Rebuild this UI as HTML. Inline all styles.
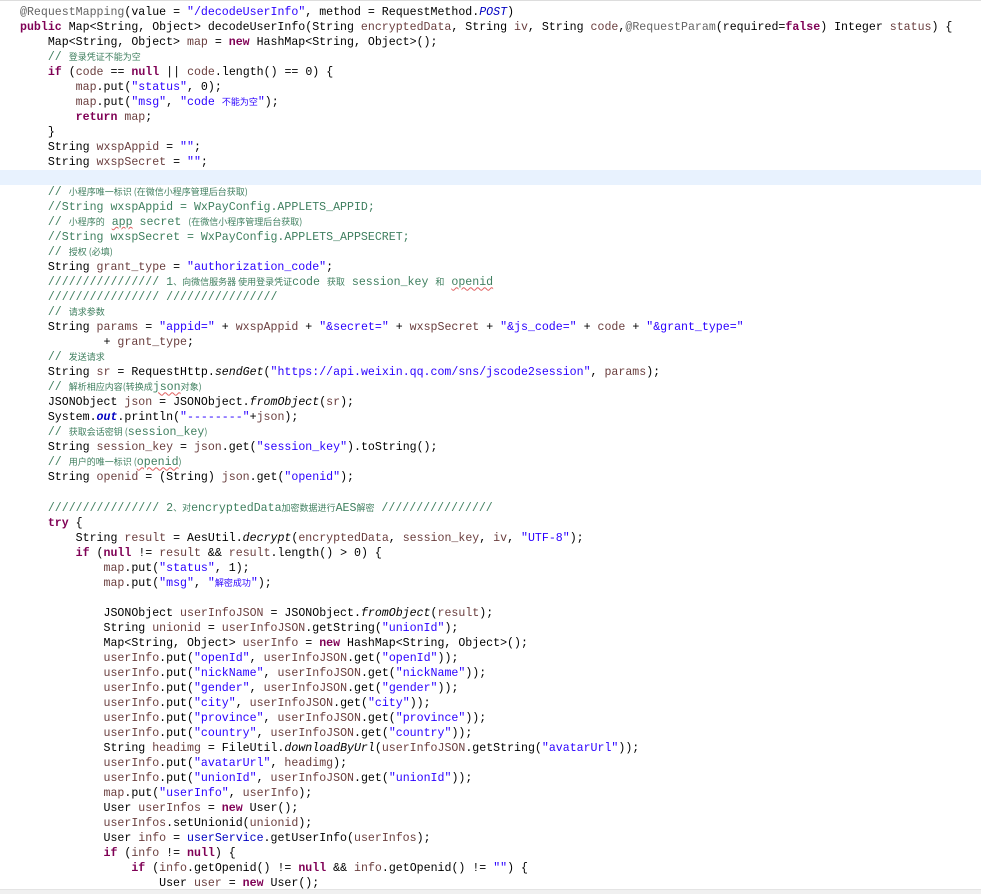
<!DOCTYPE html>
<html><head><meta charset="utf-8"><style>
html,body{margin:0;padding:0;background:#fff;width:981px;height:894px;overflow:hidden;position:relative}
.top{position:absolute;left:0;top:0;width:981px;height:1px;background:#ddd}
.bot{position:absolute;left:0;top:889px;width:981px;height:5px;background:#f0f0f0;border-top:1px solid #e4e4e4}
.hl{position:absolute;left:0;top:170px;width:981px;height:15px;background:#e8f2fe}
pre{position:absolute;left:20px;top:5px;margin:0;font-family:"Liberation Mono",monospace;font-size:11.6px;line-height:15.02px;color:#000;white-space:pre}
pre span{line-height:0}
.k{color:#7f0055;font-weight:bold}
.s{color:#2a00ff}
.c{color:#3f7f5f}
.a{color:#646464}
.v{color:#6a3e3e}
.i{font-style:italic}
.f{color:#0000c0}
.z{font-family:"Noto Sans CJK SC","WenQuanYi Zen Hei",sans-serif;font-size:9px;line-height:0}
.u{text-decoration:underline wavy #e06060;text-decoration-thickness:1px}
</style></head><body>
<div class="top"></div>
<div class="hl"></div>
<pre><span class="a">@RequestMapping</span>(value = <span class="s">"/decodeUserInfo"</span>, method = RequestMethod.<span class="f i">POST</span>)
<span class="k">public</span> Map&lt;String, Object&gt; decodeUserInfo(String <span class="v">encryptedData</span>, String <span class="v">iv</span>, String <span class="v">code</span>,<span class="a">@RequestParam</span>(required=<span class="k">false</span>) Integer <span class="v">status</span>) {
    Map&lt;String, Object&gt; <span class="v">map</span> = <span class="k">new</span> HashMap&lt;String, Object&gt;();
    <span class="c">// <span class="z">登录凭证不能为空</span></span>
    <span class="k">if</span> (<span class="v">code</span> == <span class="k">null</span> || <span class="v">code</span>.length() == 0) {
        <span class="v">map</span>.put(<span class="s">"status"</span>, 0);
        <span class="v">map</span>.put(<span class="s">"msg"</span>, <span class="s">"code <span class="z">不能为空</span>"</span>);
        <span class="k">return</span> <span class="v">map</span>;
    }
    String <span class="v">wxspAppid</span> = <span class="s">""</span>;
    String <span class="v">wxspSecret</span> = <span class="s">""</span>;

    <span class="c">// <span class="z">小程序唯一标识 (在微信小程序管理后台获取)</span></span>
    <span class="c">//String wxspAppid = WxPayConfig.APPLETS_APPID;</span>
    <span class="c">// <span class="z">小程序的</span> <span class="u">app</span> secret <span class="z">(在微信小程序管理后台获取)</span></span>
    <span class="c">//String wxspSecret = WxPayConfig.APPLETS_APPSECRET;</span>
    <span class="c">// <span class="z">授权 (必填)</span></span>
    String <span class="v">grant_type</span> = <span class="s">"authorization_code"</span>;
    <span class="c">//////////////// 1<span class="z">、向微信服务器 使用登录凭证</span>code <span class="z">获取</span> session_key <span class="z">和</span> <span class="u">openid</span></span>
    <span class="c">//////////////// ////////////////</span>
    <span class="c">// <span class="z">请求参数</span></span>
    String <span class="v">params</span> = <span class="s">"appid="</span> + <span class="v">wxspAppid</span> + <span class="s">"&amp;secret="</span> + <span class="v">wxspSecret</span> + <span class="s">"&amp;js_code="</span> + <span class="v">code</span> + <span class="s">"&amp;grant_type="</span>
            + <span class="v">grant_type</span>;
    <span class="c">// <span class="z">发送请求</span></span>
    String <span class="v">sr</span> = RequestHttp.<span class="i">sendGet</span>(<span class="s">"https://api.weixin.qq.com/sns/jscode2session"</span>, <span class="v">params</span>);
    <span class="c">// <span class="z">解析相应内容(转换成</span><span class="u">json</span><span class="z">对象)</span></span>
    JSONObject <span class="v">json</span> = JSONObject.<span class="i">fromObject</span>(<span class="v">sr</span>);
    System.<span class="f i" style="font-weight:bold">out</span>.println(<span class="s">"--------"</span>+<span class="v">json</span>);
    <span class="c">// <span class="z">获取会话密钥 (</span>session_key<span class="z">)</span></span>
    String <span class="v">session_key</span> = <span class="v">json</span>.get(<span class="s">"session_key"</span>).toString();
    <span class="c">// <span class="z">用户的唯一标识 (</span><span class="u">openid</span><span class="z">)</span></span>
    String <span class="v">openid</span> = (String) <span class="v">json</span>.get(<span class="s">"openid"</span>);

    <span class="c">//////////////// 2<span class="z">、对</span>encryptedData<span class="z">加密数据进行</span>AES<span class="z">解密</span> ////////////////</span>
    <span class="k">try</span> {
        String <span class="v">result</span> = AesUtil.<span class="i">decrypt</span>(<span class="v">encryptedData</span>, <span class="v">session_key</span>, <span class="v">iv</span>, <span class="s">"UTF-8"</span>);
        <span class="k">if</span> (<span class="k">null</span> != <span class="v">result</span> &amp;&amp; <span class="v">result</span>.length() &gt; 0) {
            <span class="v">map</span>.put(<span class="s">"status"</span>, 1);
            <span class="v">map</span>.put(<span class="s">"msg"</span>, <span class="s">"<span class="z">解密成功</span>"</span>);

            JSONObject <span class="v">userInfoJSON</span> = JSONObject.<span class="i">fromObject</span>(<span class="v">result</span>);
            String <span class="v">unionid</span> = <span class="v">userInfoJSON</span>.getString(<span class="s">"unionId"</span>);
            Map&lt;String, Object&gt; <span class="v">userInfo</span> = <span class="k">new</span> HashMap&lt;String, Object&gt;();
            <span class="v">userInfo</span>.put(<span class="s">"openId"</span>, <span class="v">userInfoJSON</span>.get(<span class="s">"openId"</span>));
            <span class="v">userInfo</span>.put(<span class="s">"nickName"</span>, <span class="v">userInfoJSON</span>.get(<span class="s">"nickName"</span>));
            <span class="v">userInfo</span>.put(<span class="s">"gender"</span>, <span class="v">userInfoJSON</span>.get(<span class="s">"gender"</span>));
            <span class="v">userInfo</span>.put(<span class="s">"city"</span>, <span class="v">userInfoJSON</span>.get(<span class="s">"city"</span>));
            <span class="v">userInfo</span>.put(<span class="s">"province"</span>, <span class="v">userInfoJSON</span>.get(<span class="s">"province"</span>));
            <span class="v">userInfo</span>.put(<span class="s">"country"</span>, <span class="v">userInfoJSON</span>.get(<span class="s">"country"</span>));
            String <span class="v">headimg</span> = FileUtil.<span class="i">downloadByUrl</span>(<span class="v">userInfoJSON</span>.getString(<span class="s">"avatarUrl"</span>));
            <span class="v">userInfo</span>.put(<span class="s">"avatarUrl"</span>, <span class="v">headimg</span>);
            <span class="v">userInfo</span>.put(<span class="s">"unionId"</span>, <span class="v">userInfoJSON</span>.get(<span class="s">"unionId"</span>));
            <span class="v">map</span>.put(<span class="s">"userInfo"</span>, <span class="v">userInfo</span>);
            User <span class="v">userInfos</span> = <span class="k">new</span> User();
            <span class="v">userInfos</span>.setUnionid(<span class="v">unionid</span>);
            User <span class="v">info</span> = <span class="f">userService</span>.getUserInfo(<span class="v">userInfos</span>);
            <span class="k">if</span> (<span class="v">info</span> != <span class="k">null</span>) {
                <span class="k">if</span> (<span class="v">info</span>.getOpenid() != <span class="k">null</span> &amp;&amp; <span class="v">info</span>.getOpenid() != <span class="s">""</span>) {
                    User <span class="v">user</span> = <span class="k">new</span> User();
</pre>
<div class="bot"></div>
</body></html>
